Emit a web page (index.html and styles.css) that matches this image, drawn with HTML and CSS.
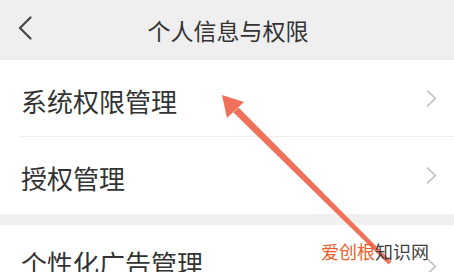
FILE: index.html
```html
<!DOCTYPE html>
<html lang="zh">
<head>
<meta charset="utf-8">
<link rel="stylesheet" href="styles.css">
</head>
<body>
<div class="page">
  <header class="topbar">
    <svg class="back" width="14" height="24" viewBox="0 0 14 24"><path d="M12.5 1.5 L2 12 L12.5 22.5" fill="none" stroke="#454545" stroke-width="2.2" stroke-linecap="round" stroke-linejoin="round"/></svg>
    <h1 class="title">个人信息与权限</h1>
  </header>
  <section class="group">
    <div class="row row-first"><span class="label">系统权限管理</span><svg class="chev" width="11" height="17" viewBox="0 0 11 17"><path d="M1.5 1 L9.5 8.5 L1.5 16" fill="none" stroke="#bdbdbd" stroke-width="1.6" stroke-linecap="round" stroke-linejoin="round"/></svg></div>
    <div class="row row-second"><span class="label">授权管理</span><svg class="chev" width="11" height="17" viewBox="0 0 11 17"><path d="M1.5 1 L9.5 8.5 L1.5 16" fill="none" stroke="#bdbdbd" stroke-width="1.6" stroke-linecap="round" stroke-linejoin="round"/></svg></div>
  </section>
  <div class="gap"></div>
  <section class="group">
    <div class="row row-third"><span class="label">个性化广告管理</span><svg class="chev" width="11" height="17" viewBox="0 0 11 17"><path d="M1.5 1 L9.5 8.5 L1.5 16" fill="none" stroke="#bdbdbd" stroke-width="1.6" stroke-linecap="round" stroke-linejoin="round"/></svg></div>
  </section>
  <svg class="pointer" width="454" height="272" viewBox="0 0 454 272">
    <polygon points="233.5,112.5 238.5,107.5 391.4,261.6 388.6,264.4" fill="#f0705a"/>
    <polygon points="222,95 244,102 227,118" fill="#f0705a"/>
  </svg>
  <div class="watermark"><span class="wm-accent">爱创根</span><span class="wm-rest">知识网</span></div>
</div>
</body>
</html>
```
FILE: styles.css
```css
html, body {
  margin: 0;
  padding: 0;
  background: #ffffff;
}
body {
  font-family: "Noto Sans CJK SC", "Noto Sans", sans-serif;
  color: #333333;
}
.page {
  position: relative;
  width: 454px;
  height: 272px;
  overflow: hidden;
  background: #ffffff;
}
.topbar {
  height: 60px;
  background: #efefef;
  display: flex;
  align-items: center;
  justify-content: center;
  position: relative;
}
.back {
  position: absolute;
  left: 18px;
  top: 16px;
}
.title {
  margin: 0;
  font-size: 23px;
  font-weight: 400;
  color: #333333;
  line-height: 1;
  padding-left: 2px;
}
.group {
  background: #ffffff;
}
.row {
  display: flex;
  align-items: center;
  justify-content: space-between;
  padding: 0 17px 0 21px;
  box-sizing: border-box;
}
.row-first {
  height: 77px;
  position: relative;
}
.row-first::after {
  content: "";
  position: absolute;
  left: 20px;
  right: 0;
  bottom: 0;
  height: 1px;
  background: #eeeeee;
}
.row-second {
  height: 77px;
}
.row-third {
  height: 47px;
  align-items: flex-start;
}
.label {
  font-size: 26px;
  line-height: 1;
  color: #333333;
  padding-top: 5px;
}
.row-third .label {
  padding-top: 25px;
}
.row-third .chev {
  margin-top: 33px;
}
.chev {
  display: block;
}
.gap {
  height: 11px;
  background: #f0f0f0;
}
.pointer {
  position: absolute;
  left: 0;
  top: 0;
}
.watermark {
  position: absolute;
  left: 321px;
  top: 242px;
  font-size: 18px;
  line-height: 1;
  letter-spacing: 0;
}
.wm-accent {
  color: #e8612c;
}
.wm-rest {
  color: #3e3e3e;
}
```
